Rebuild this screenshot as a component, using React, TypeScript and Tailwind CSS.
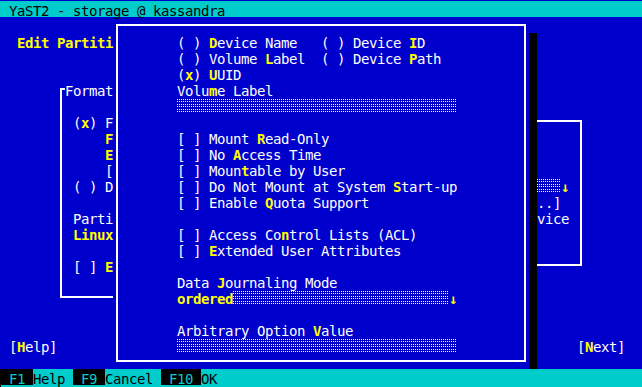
import React from 'react';

const COLS = 80;
const ROWS = 24;

type Attr = 'W' | 'Y' | 'T' | 'K' | 'S' | 'F';

const ATTR_CLASS: Record<Attr, string> = {
  W: 'text-white',
  Y: 'text-[#ffff00] font-bold',
  T: 'bg-[#00cccc] text-black',
  K: 'bg-black text-[#00cccc]',
  S: 'bg-black',
  F: '',
};

const BOX = '─│┌┐└┘';

function buildScreen() {
  const ch: string[][] = Array.from({ length: ROWS }, () => Array(COLS).fill(' '));
  const at: Attr[][] = Array.from({ length: ROWS }, () => Array(COLS).fill('W'));
  const put = (r: number, c: number, text: string, a: Attr = 'W') => {
    [...text].forEach((t, i) => {
      ch[r][c + i] = t;
      at[r][c + i] = a;
    });
  };
  const fill = (r: number, c: number, n: number, a: Attr, t = ' ') => put(r, c, t.repeat(n), a);

  // title + key bar
  fill(0, 0, COLS, 'T');
  put(0, 1, 'YaST2 - storage @ kassandra', 'T');
  fill(23, 0, COLS, 'T');
  put(23, 0, ' F1 ', 'K');
  put(23, 4, 'Help ', 'T');
  put(23, 9, ' F9 ', 'K');
  put(23, 13, 'Cancel ', 'T');
  put(23, 20, ' F10 ', 'K');
  put(23, 25, 'OK', 'T');

  // background dialog
  put(2, 2, 'Edit Partiti', 'Y');
  put(5, 7, '┌Format');
  for (let r = 6; r <= 17; r++) put(r, 7, '│');
  put(18, 7, '└──────');
  put(7, 9, '(x) F');
  put(7, 10, 'x', 'Y');
  put(8, 13, 'F', 'Y');
  put(9, 13, 'E', 'Y');
  put(10, 13, '[');
  put(11, 9, '( ) D');
  put(13, 9, 'Parti');
  put(14, 9, 'Linux', 'Y');
  put(16, 9, '[ ] E');
  put(16, 13, 'E', 'Y');

  put(7, 67, '─────┐');
  for (let r = 8; r <= 15; r++) put(r, 72, '│');
  put(16, 67, '─────┘');
  fill(11, 67, 3, 'F');
  put(11, 70, '↓', 'Y');
  put(12, 67, '..]');
  put(13, 67, 'vice');

  put(21, 1, '[Help]');
  put(21, 2, 'H', 'Y');
  put(21, 72, '[Next]');
  put(21, 73, 'N', 'Y');

  // popup: fstab options
  put(1, 14, '┌' + '─'.repeat(50) + '┐');
  for (let r = 2; r <= 21; r++) {
    put(r, 14, '│' + ' '.repeat(50) + '│');
  }
  put(22, 14, '└' + '─'.repeat(50) + '┘');
  for (let r = 2; r <= 22; r++) put(r, 66, ' ', 'S');

  put(2, 22, '( ) Device Name');
  put(2, 26, 'D', 'Y');
  put(2, 40, '( ) Device ID');
  put(2, 51, 'I', 'Y');
  put(3, 22, '( ) Volume Label');
  put(3, 33, 'L', 'Y');
  put(3, 40, '( ) Device Path');
  put(3, 51, 'P', 'Y');
  put(4, 22, '(x) UUID');
  put(4, 23, 'x', 'Y');
  put(4, 26, 'U', 'Y');
  put(5, 22, 'Volume Label');
  put(5, 26, 'm', 'Y');
  fill(6, 22, 35, 'F');

  put(8, 22, '[ ] Mount Read-Only');
  put(8, 32, 'R', 'Y');
  put(9, 22, '[ ] No Access Time');
  put(9, 29, 'A', 'Y');
  put(10, 22, '[ ] Mountable by User');
  put(10, 30, 't', 'Y');
  put(11, 22, '[ ] Do Not Mount at System Start-up');
  put(11, 49, 'S', 'Y');
  put(12, 22, '[ ] Enable Quota Support');
  put(12, 33, 'Q', 'Y');
  put(14, 22, '[ ] Access Control Lists (ACL)');
  put(14, 35, 'n', 'Y');
  put(15, 22, '[ ] Extended User Attributes');
  put(15, 26, 'E', 'Y');

  put(17, 22, 'Data Journaling Mode');
  put(17, 27, 'J', 'Y');
  put(18, 22, 'ordered', 'Y');
  fill(18, 29, 27, 'F');
  put(18, 56, '↓', 'Y');

  put(20, 22, 'Arbitrary Option Value');
  put(20, 39, 'V', 'Y');
  fill(21, 22, 35, 'F');

  return { ch, at };
}

function BoxCell({ c }: { c: string }) {
  const parts: [number, number, number, number][] = {
    '─': [[0, 7, 8, 2]],
    '│': [[3, 0, 2, 16]],
    '┌': [[3, 7, 5, 2], [3, 7, 2, 9]],
    '┐': [[0, 7, 5, 2], [3, 7, 2, 9]],
    '└': [[3, 0, 2, 9], [3, 7, 5, 2]],
    '┘': [[3, 0, 2, 9], [0, 7, 5, 2]],
  }[c] as [number, number, number, number][];
  return (
    <svg width={8} height={16} className="block shrink-0">
      {parts.map(([x, y, w, h], i) => (
        <rect key={i} x={x} y={y} width={w} height={h} fill="#ffffff" />
      ))}
    </svg>
  );
}

function Dots({ n, id }: { n: number; id: string }) {
  return (
    <svg width={n * 8} height={16} className="block shrink-0">
      <defs>
        <pattern id={id} width="2" height="16" patternUnits="userSpaceOnUse">
          {[2, 4, 7, 9, 12, 14].map((y) => (
            <rect key={y} x={0} y={y} width={1} height={1} fill="#ffffff" />
          ))}
        </pattern>
      </defs>
      <rect width="100%" height="100%" fill={`url(#${id})`} />
    </svg>
  );
}

function Row({ r, ch, at }: { r: number; ch: string[]; at: Attr[] }) {
  const out: React.ReactNode[] = [];
  let c = 0;
  while (c < COLS) {
    if (BOX.includes(ch[c])) {
      out.push(<BoxCell key={c} c={ch[c]} />);
      c++;
      continue;
    }
    const a = at[c];
    let e = c;
    while (e < COLS && at[e] === a && !BOX.includes(ch[e])) e++;
    const n = e - c;
    if (a === 'F') {
      out.push(<Dots key={c} n={n} id={`dots-${r}-${c}`} />);
    } else {
      out.push(
        <span
          key={c}
          className={`block h-4 shrink-0 overflow-visible whitespace-pre leading-[20px] tracking-[-0.43px] ${ATTR_CLASS[a]}`}
          style={{ width: n * 8 }}
        >
          {ch.slice(c, e).join('')}
        </span>
      );
    }
    c = e;
  }
  return <>{out}</>;
}

export default function App() {
  const { ch, at } = buildScreen();
  return (
    <div className="w-[642px] h-[387px] overflow-hidden bg-[#0000cc] pt-px font-['DejaVu_Sans_Mono','Liberation_Mono',monospace] text-[14px]">
      {ch.map((row, r) => (
        <div
          key={r}
          className={
            r === 0
              ? 'flex h-4 pl-px bg-[#00cccc]'
              : r === ROWS - 1
              ? 'flex h-[18px] border-l border-black bg-[#00cccc]'
              : 'flex h-4 pl-px'
          }
        >
          <Row r={r} ch={row} at={at[r]} />
        </div>
      ))}
    </div>
  );
}
